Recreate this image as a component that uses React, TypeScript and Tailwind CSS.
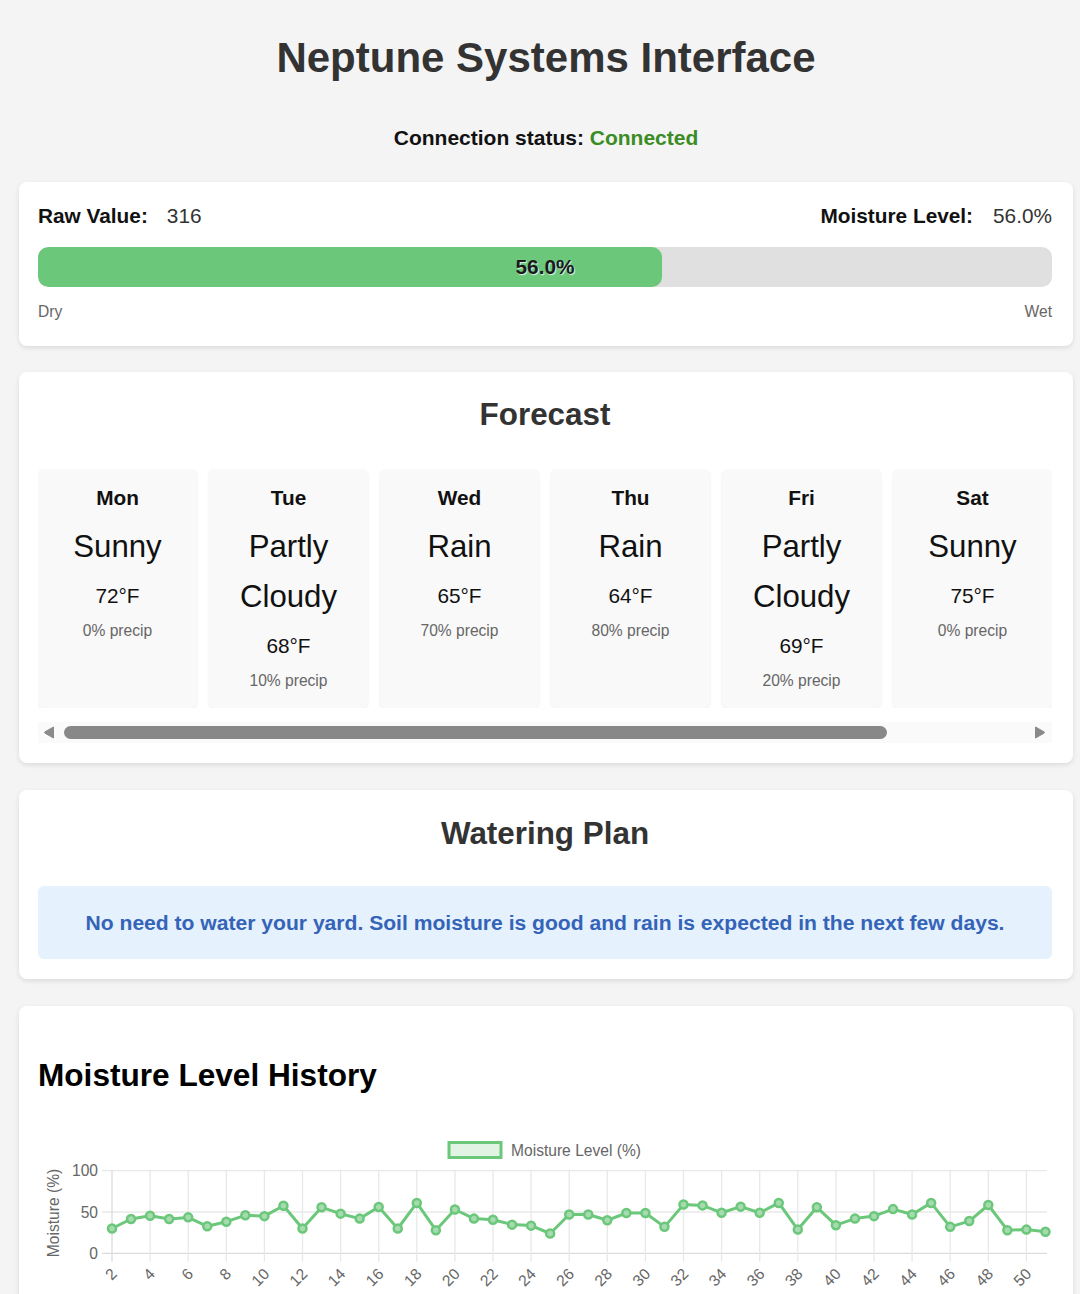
import React from "react";

const forecast = [
  { day: "Mon", cond: "Sunny", temp: "72°F", precip: "0% precip" },
  { day: "Tue", cond: "Partly Cloudy", temp: "68°F", precip: "10% precip" },
  { day: "Wed", cond: "Rain", temp: "65°F", precip: "70% precip" },
  { day: "Thu", cond: "Rain", temp: "64°F", precip: "80% precip" },
  { day: "Fri", cond: "Partly Cloudy", temp: "69°F", precip: "20% precip" },
  { day: "Sat", cond: "Sunny", temp: "75°F", precip: "0% precip" },
];

const data = [
  30, 41.5, 45.5, 41.5, 43.5, 32.7, 38.3, 46, 45, 57.6, 30, 55.7, 48, 42, 56, 30, 61, 28, 53, 42,
  40.7, 34.7, 33.5, 24, 47, 47, 40, 48.8, 48.8, 32, 59, 58, 49, 56.5, 49, 61, 28.7, 55.7, 34, 42,
  45, 53.5, 47, 61, 32, 39, 58.5, 28, 28.7, 26,
];

const FONT = "Liberation Sans, Arial, sans-serif";

function Chart() {
  const x0 = 74;
  const step = 19.05;
  const yFor = (v: number) => 123.3 - v * 0.826;
  const pts = data.map((v, i) => [x0 + i * step, yFor(v)] as const);
  const path = pts.map((p, i) => `${i === 0 ? "M" : "L"}${p[0].toFixed(1)},${p[1].toFixed(1)}`).join(" ");
  const labels: number[] = [];
  for (let l = 2; l <= 50; l += 2) labels.push(l);
  const xRight = 1009;
  return (
    <svg width="1014" height="200" viewBox="0 0 1014 200" className="block" fontFamily={FONT}>
      <rect x="411" y="12.5" width="52" height="15" fill="rgba(107,199,122,0.2)" stroke="#6bc77a" strokeWidth="3" />
      <text x="473" y="20.5" fontSize="15.6" fill="#666" dominantBaseline="central">
        Moisture Level (%)
      </text>
      <text
        x="15"
        y="83"
        fontSize="15.6"
        fill="#666"
        textAnchor="middle"
        dominantBaseline="central"
        transform="rotate(-90 15 83)"
      >
        Moisture (%)
      </text>
      {[100, 50, 0].map((v) => (
        <g key={v}>
          <line x1="64" x2={xRight} y1={yFor(v)} y2={yFor(v)} stroke={v === 0 ? "#dcdcdc" : "#e8e8e8"} strokeWidth="1.3" />
          <text x="60" y={yFor(v)} fontSize="15.6" fill="#666" textAnchor="end" dominantBaseline="central">
            {v}
          </text>
        </g>
      ))}
      {labels.map((l) => {
        const x = x0 + (l - 2) * step;
        return (
          <line key={l} x1={x} x2={x} y1={yFor(100)} y2="131.7" stroke={l === 2 ? "#dcdcdc" : "#e8e8e8"} strokeWidth="1.3" />
        );
      })}
      {labels.map((l) => {
        const x = x0 + (l - 2) * step + 2;
        const y = 141;
        return (
          <text
            key={l}
            x={x}
            y={y}
            fontSize="15.6"
            fill="#666"
            textAnchor="end"
            dominantBaseline="central"
            transform={`rotate(-45 ${x} ${y})`}
          >
            {l}
          </text>
        );
      })}
      <path d={path} fill="none" stroke="#6bc77a" strokeWidth="3" strokeLinejoin="round" />
      {pts.map((p, i) => (
        <circle key={i} cx={p[0]} cy={p[1]} r="4" fill="#a6dbb0" stroke="#6bc77a" strokeWidth="2.5" />
      ))}
    </svg>
  );
}

function Arrow({ dir }: { dir: "left" | "right" }) {
  return (
    <svg width="12" height="13" viewBox="0 0 12 13" className="block shrink-0">
      {dir === "left" ? (
        <path d="M10.5 1 L10.5 12 L2 7.2 Q1 6.5 2 5.8 Z" fill="#8a8a8a" stroke="#8a8a8a" strokeWidth="1" strokeLinejoin="round" />
      ) : (
        <path d="M1.5 1 L1.5 12 L10 7.2 Q11 6.5 10 5.8 Z" fill="#8a8a8a" stroke="#8a8a8a" strokeWidth="1" strokeLinejoin="round" />
      )}
    </svg>
  );
}

export default function App() {
  return (
    <div className="min-h-screen bg-[#f4f4f4] font-['Liberation_Sans',Arial,sans-serif] text-[#111]">
      <div className="ml-[19px] w-[1054px] pt-[31px] pb-[40px]">
        <h1 className="text-center text-[42px] font-bold leading-[54px] text-[#333]">Neptune Systems Interface</h1>
        <p className="mt-[41px] text-center text-[21px] font-bold leading-[24px] text-[#111]">
          Connection status: <span className="text-[#3a8c24]">Connected</span>
        </p>

        {/* Card 1 */}
        <div className="mt-[32px] rounded-[8px] bg-white pl-[19px] pr-[21px] pt-[20px] pb-[25px] shadow-[0_2px_5px_rgba(0,0,0,0.1)]">
          <div className="flex justify-between text-[20.8px] leading-[28px]">
            <div className="flex gap-[19px]">
              <span className="font-bold text-[#111]">Raw Value:</span>
              <span className="text-[#333]">316</span>
            </div>
            <div className="flex gap-[20px]">
              <span className="font-bold text-[#111]">Moisture Level:</span>
              <span className="text-[#333]">56.0%</span>
            </div>
          </div>
          <div className="relative mt-[17px] h-[40px] overflow-hidden rounded-[10px] bg-[#e0e0e0]">
            <div className="h-full w-[624px] rounded-[10px] bg-[#6bc77a]" />
            <div className="absolute inset-0 flex items-center justify-center text-[20.8px] font-bold text-[#1a1a1a] [text-shadow:1px_1px_1px_rgba(255,255,255,0.8)]">
              56.0%
            </div>
          </div>
          <div className="mt-[16px] flex justify-between text-[15.6px] leading-[18px] text-[#666]">
            <span>Dry</span>
            <span>Wet</span>
          </div>
        </div>

        {/* Forecast */}
        <div className="mt-[26px] rounded-[8px] bg-white pl-[19px] pr-[21px] pt-[25px] pb-[20px] shadow-[0_2px_5px_rgba(0,0,0,0.1)]">
          <h2 className="text-center text-[31.4px] font-bold leading-[36px] text-[#333]">Forecast</h2>
          <div className="mt-[36px] flex gap-[12px] overflow-hidden">
            {forecast.map((f) => (
              <div
                key={f.day}
                className="w-[159px] shrink-0 rounded-[6px] bg-[#f9f9f9] px-[10px] pt-[16px] pb-[17px] text-center shadow-[0_1px_3px_rgba(0,0,0,0.08)]"
              >
                <div className="text-[20.8px] font-bold leading-[26px] text-[#111]">{f.day}</div>
                <div className="mt-[11px] text-[31.2px] leading-[50px] text-[#111]">{f.cond}</div>
                <div className="mt-[11px] text-[20.8px] leading-[26px] text-[#111]">{f.temp}</div>
                <div className="mt-[12px] text-[15.6px] leading-[20px] text-[#666]">{f.precip}</div>
              </div>
            ))}
          </div>
          <div className="mt-[14px] flex h-[21px] items-center bg-[#fafafa] pl-[5px] pr-[6px]">
            <Arrow dir="left" />
            <div className="ml-[9px] h-[13px] w-[823px] rounded-full bg-[#888]" />
            <div className="flex-1" />
            <Arrow dir="right" />
          </div>
        </div>

        {/* Watering plan */}
        <div className="mt-[27px] rounded-[8px] bg-white pl-[19px] pr-[21px] pt-[26px] pb-[20px] shadow-[0_2px_5px_rgba(0,0,0,0.1)]">
          <h2 className="text-center text-[31.4px] font-bold leading-[36px] text-[#333]">Watering Plan</h2>
          <div className="mt-[34px] flex h-[73px] items-center justify-center rounded-[6px] bg-[#e5f1fc] text-[21.1px] font-bold text-[#3463b8]">
            No need to water your yard. Soil moisture is good and rain is expected in the next few days.
          </div>
        </div>

        {/* History */}
        <div className="mt-[27px] rounded-[8px] bg-white pl-[19px] pr-[21px] pt-[20px] pb-[20px] shadow-[0_2px_5px_rgba(0,0,0,0.1)]">
          <h2 className="mt-[31px] text-[31.6px] font-bold leading-[36px] text-[#000]">Moisture Level History</h2>
          <div className="mt-[37px]">
            <Chart />
          </div>
        </div>
      </div>
    </div>
  );
}
